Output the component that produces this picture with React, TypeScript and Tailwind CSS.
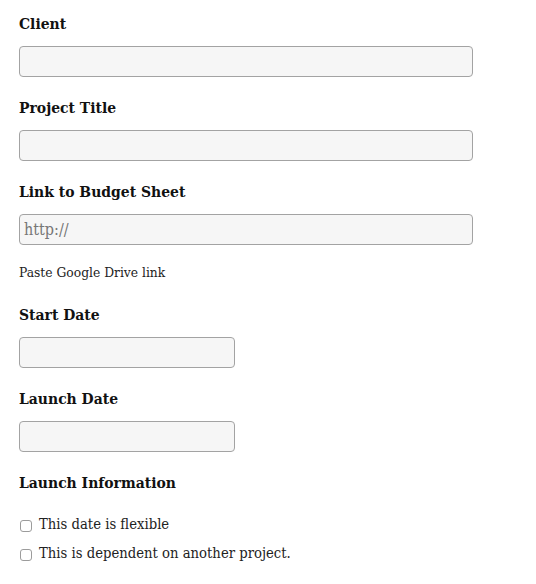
import { useState } from 'react'

const labelCls = 'block text-[15.5px] leading-[24px] font-bold text-[#111]'
const inputCls =
  'block h-[31px] rounded-[4px] border border-[#a3a3a3] bg-[#f6f6f6] px-[4px] text-[16px] text-[#333] outline-none placeholder:text-[#777]'

function Field({ label, wide = true, placeholder }: { label: string; wide?: boolean; placeholder?: string }) {
  return (
    <div className="mb-[19px]">
      <label className={labelCls}>{label}</label>
      <input
        type="text"
        placeholder={placeholder}
        className={`${inputCls} mt-[10px] ${wide ? 'w-[454px]' : 'w-[216px]'}`}
      />
    </div>
  )
}

function Check({ label, checked, onChange }: { label: string; checked: boolean; onChange: (v: boolean) => void }) {
  return (
    <label className="flex items-start gap-[7px] text-[14.7px] leading-[20px] text-[#222]">
      <input
        type="checkbox"
        checked={checked}
        onChange={(e) => onChange(e.target.checked)}
        className="ml-[1px] mt-[6px] h-[12px] w-[12px] shrink-0 appearance-none rounded-[3px] border border-[#9c9c9c] bg-white checked:bg-[#3b82f6]"
      />
      {label}
    </label>
  )
}

export default function App() {
  const [flex, setFlex] = useState(false)
  const [dep, setDep] = useState(false)
  return (
    <div
      className="min-h-[584px] bg-white pl-[19px] pt-[12px] text-[#111] font-stretch-condensed"
      style={{ fontFamily: '"DejaVu Serif Condensed", "DejaVu Serif", serif' }}
    >
      <Field label="Client" />
      <Field label="Project Title" />
      <div className="mb-[22px]">
        <label className={labelCls}>Link to Budget Sheet</label>
        <input type="text" placeholder="http://" className={`${inputCls} mt-[10px] w-[454px]`} />
        <p className="mt-[18px] text-[13.7px] leading-[18px] text-[#222]">Paste Google Drive link</p>
      </div>
      <Field label="Start Date" wide={false} />
      <Field label="Launch Date" wide={false} />
      <div>
        <label className={labelCls}>Launch Information</label>
        <div className="mt-[19px] flex flex-col gap-[9px]">
          <Check label="This date is flexible" checked={flex} onChange={setFlex} />
          <Check label="This is dependent on another project." checked={dep} onChange={setDep} />
        </div>
      </div>
    </div>
  )
}
